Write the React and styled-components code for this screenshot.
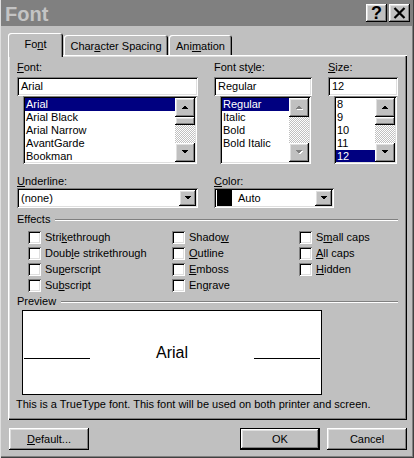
import React from 'react';
import styled, { createGlobalStyle, css } from 'styled-components';

const GlobalStyle = createGlobalStyle`
  html, body { margin: 0; padding: 0; background: #c0c0c0; }
  body {
    font-family: "Liberation Sans", Arial, sans-serif;
    font-size: 11px;
    color: #000;
  }
  * { box-sizing: border-box; }
`;

// win98 bevels
const raised = css`
  box-shadow: inset -1px -1px #000, inset 1px 1px #fff, inset -2px -2px #808080,
    inset 2px 2px #dfdfdf;
`;
const sunken = css`
  box-shadow: inset 1px 1px #808080, inset -1px -1px #fff, inset 2px 2px #000,
    inset -2px -2px #dfdfdf;
`;

const Window = styled.div`
  width: 414px;
  height: 458px;
  background: #c0c0c0;
  padding: 0 2px 2px 1px;
  box-shadow: inset 1px 0 #dfdfdf, inset -1px -1px #404040, inset -2px -2px #808080;
  display: flex;
  flex-direction: column;
`;

const TitleBar = styled.div`
  height: 26px;
  background: #808080;
  display: flex;
  align-items: center;
  justify-content: space-between;
  padding: 0 2px 0 4px;
`;

const Title = styled.div`
  font-size: 20px;
  font-weight: bold;
  color: #c4c4c4;
  margin-top: 2px;
`;

const TitleButtons = styled.div`
  display: flex;
  gap: 2px;
`;

const TitleButton = styled.div`
  width: 21px;
  height: 18px;
  background: #c0c0c0;
  ${raised};
  display: flex;
  align-items: center;
  justify-content: center;
  font-size: 18px;
  font-weight: bold;
  line-height: 18px;
`;

const Body = styled.div`
  padding: 7px 5px 0 7px;
  display: flex;
  flex-direction: column;
`;

const TabRow = styled.div`
  display: flex;
  align-items: flex-end;
  height: 22px;
  gap: 1px;
`;

const Tab = styled.div`
  position: relative;
  z-index: ${(p) => (p.$active ? 1 : 0)};
  width: ${(p) => p.$w}px;
  height: ${(p) => (p.$active ? 24 : 20)}px;
  margin-bottom: ${(p) => (p.$active ? -2 : 0)}px;
  padding: ${(p) => (p.$active ? '0 0 2px' : '2px 0 0')};
  background: #c0c0c0;
  border-radius: 3px 3px 0 0;
  box-shadow: inset 1px 1px #fff, inset -1px 0 #000, inset -2px 0 #808080;
  display: flex;
  align-items: center;
  justify-content: center;
  line-height: 13px;
`;

const Panel = styled.div`
  width: 399px;
  height: 365px;
  box-shadow: inset 1px 1px #fff, inset -1px -1px #000, inset -2px -2px #808080,
    inset 2px 2px #dfdfdf;
  padding: 6px 9px 0 9px;
  display: flex;
  flex-direction: column;
`;

const TopRow = styled.div`
  display: flex;
  gap: 16px;
`;

const Column = styled.div`
  width: ${(p) => p.$w}px;
  display: flex;
  flex-direction: column;
`;

const Label = styled.div`
  line-height: 13px;
  margin-bottom: ${(p) => p.$mb || 0}px;
  white-space: nowrap;
`;

const TextBox = styled.div`
  height: 19px;
  background: #fff;
  ${sunken};
  padding: 2px 2px 0 4px;
  line-height: 15px;
`;

const ListBox = styled.div`
  margin-left: 6px;
  width: calc(100% - 7px);
  height: 68px;
  background: #fff;
  ${sunken};
  padding: 2px;
  display: flex;
`;

const Items = styled.div`
  flex: 1;
  overflow: hidden;
`;

const Item = styled.div`
  height: 13px;
  line-height: 13px;
  padding-left: 1px;
  white-space: nowrap;
  background: ${(p) => (p.$selected ? '#000080' : 'transparent')};
  color: ${(p) => (p.$selected ? '#fff' : '#000')};
`;

const ScrollBar = styled.div`
  width: 20px;
  display: flex;
  flex-direction: column;
`;

const ArrowButton = styled.div`
  width: ${(p) => p.$w || 20}px;
  height: ${(p) => p.$h || 19}px;
  background: #c0c0c0;
  ${raised};
  display: flex;
  align-items: center;
  justify-content: center;
  flex-shrink: 0;
`;

const Track = styled.div`
  flex: 1;
  background: repeating-conic-gradient(#c0c0c0 0 25%, #fff 0 50%) 0 0 / 2px 2px;
`;

const Thumb = styled.div`
  width: 20px;
  height: 8px;
  background: #c0c0c0;
  ${raised};
`;

const Select = styled.div`
  height: 20px;
  width: ${(p) => p.$w}px;
  background: #fff;
  ${sunken};
  padding: 2px;
  display: flex;
  align-items: center;
`;

const SelectText = styled.div`
  flex: 1;
  padding-left: ${(p) => p.$pl || 2}px;
  line-height: 16px;
`;

const Swatch = styled.div`
  width: 15px;
  height: 16px;
  margin-left: 1px;
  background: #000;
`;

const Row = styled.div`
  display: flex;
  gap: 16px;
  margin-top: 11px;
`;

const GroupHeader = styled.div`
  display: flex;
  align-items: center;
  margin-top: ${(p) => p.$mt}px;
  line-height: 13px;
`;

const GroupLine = styled.div`
  flex: 1;
  margin-left: 5px;
  height: 2px;
  border-top: 1px solid #808080;
  border-bottom: 1px solid #fff;
`;

const Effects = styled.div`
  display: grid;
  grid-template-columns: 144px 127px 1fr;
  grid-auto-rows: 16px;
  padding-left: 11px;
  margin-top: 3px;
`;

const CheckItem = styled.div`
  display: flex;
  align-items: center;
  gap: 4px;
  white-space: nowrap;
`;

const CheckBox = styled.div`
  width: 13px;
  height: 13px;
  background: #fff;
  ${sunken};
`;

const PreviewBox = styled.div`
  margin: 2px 0 0 5px;
  width: 300px;
  height: 85px;
  background: #fff;
  border: 1px solid #000;
  display: flex;
  align-items: center;
  padding: 0 1px;
`;

const PreviewRow = styled.div`
  display: flex;
  align-items: flex-end;
  width: 100%;
  height: 16px;
`;

const PreviewLine = styled.div`
  width: 66px;
  height: 1px;
  background: #000;
  margin-bottom: 2px;
`;

const PreviewText = styled.div`
  flex: 1;
  text-align: center;
  font-size: 16px;
  line-height: 16px;
`;

const Info = styled.div`
  margin: 3px 0 0 -1px;
  line-height: 13px;
  white-space: nowrap;
`;

const ButtonRow = styled.div`
  display: flex;
  margin-top: 8px;
  padding-left: 1px;
  gap: 7px;
`;

const Button = styled.div`
  width: 80px;
  height: 22px;
  background: #c0c0c0;
  ${raised};
  border: ${(p) => (p.$default ? '1px solid #000' : 'none')};
  display: flex;
  align-items: center;
  justify-content: center;
  margin-left: ${(p) => p.$ml || 0}px;
`;

const Hot = ({ text, at }) => (
  <>
    {text.slice(0, at)}
    <u>{text[at]}</u>
    {text.slice(at + 1)}
  </>
);

const Arrow = ({ dir, disabled }) => {
  const pts = dir === 'up' ? '0,4 3.5,0.5 7,4' : '0,0 7,0 3.5,3.5';
  return (
    <svg width="8" height="5" viewBox="0 0 8 5" shapeRendering="crispEdges">
      {disabled && (
        <polygon points={pts} fill="#fff" transform="translate(1,1)" />
      )}
      <polygon points={pts} fill={disabled ? '#808080' : '#000'} />
    </svg>
  );
};

const Scroll = ({ disabled }) => (
  <ScrollBar>
    <ArrowButton>
      <Arrow dir="up" disabled={disabled} />
    </ArrowButton>
    <Track>{!disabled && <Thumb />}</Track>
    <ArrowButton>
      <Arrow dir="down" disabled={disabled} />
    </ArrowButton>
  </ScrollBar>
);

const fonts = ['Arial', 'Arial Black', 'Arial Narrow', 'AvantGarde', 'Bookman'];
const styles = ['Regular', 'Italic', 'Bold', 'Bold Italic'];
const sizes = ['8', '9', '10', '11', '12'];

const effects = [
  ['Strikethrough', 4],
  ['Shadow', 5],
  ['Small caps', 1],
  ['Double strikethrough', 4],
  ['Outline', 0],
  ['All caps', 0],
  ['Superscript', 2],
  ['Emboss', 0],
  ['Hidden', 0],
  ['Subscript', 2],
  ['Engrave', 2],
];

const App = () => {
  return (
    <Window>
      <GlobalStyle />
      <TitleBar>
        <Title>Font</Title>
        <TitleButtons>
          <TitleButton>?</TitleButton>
          <TitleButton>
            <svg width="13" height="12" viewBox="0 0 13 12">
              <path d="M1.5 1 L11.5 11 M11.5 1 L1.5 11" stroke="#000" strokeWidth="2.2" />
            </svg>
          </TitleButton>
        </TitleButtons>
      </TitleBar>

      <Body>
        <TabRow>
          <Tab $active $w={55}>
            <Hot text="Font" at={2} />
          </Tab>
          <Tab $w={104}>
            <Hot text="Character Spacing" at={4} />
          </Tab>
          <Tab $w={63}>
            <Hot text="Animation" at={3} />
          </Tab>
        </TabRow>

        <Panel>
          <TopRow>
            <Column $w={181}>
              <Label $mb={3}>
                <Hot text="Font:" at={0} />
              </Label>
              <TextBox>Arial</TextBox>
              <ListBox>
                <Items>
                  {fonts.map((f, i) => (
                    <Item key={f} $selected={i === 0}>
                      {f}
                    </Item>
                  ))}
                </Items>
                <Scroll />
              </ListBox>
            </Column>
            <Column $w={98}>
              <Label $mb={3}>
                <Hot text="Font style:" at={7} />
              </Label>
              <TextBox>Regular</TextBox>
              <ListBox>
                <Items>
                  {styles.map((s, i) => (
                    <Item key={s} $selected={i === 0}>
                      {s}
                    </Item>
                  ))}
                </Items>
                <Scroll disabled />
              </ListBox>
            </Column>
            <Column $w={70}>
              <Label $mb={3}>
                <Hot text="Size:" at={0} />
              </Label>
              <TextBox>12</TextBox>
              <ListBox>
                <Items>
                  {sizes.map((s, i) => (
                    <Item key={s} $selected={i === 4}>
                      {s}
                    </Item>
                  ))}
                </Items>
                <Scroll />
              </ListBox>
            </Column>
          </TopRow>

          <Row>
            <Column $w={181}>
              <Label>
                <Hot text="Underline:" at={0} />
              </Label>
              <Select $w={181}>
                <SelectText>(none)</SelectText>
                <ArrowButton $w={17} $h={16}>
                  <Arrow dir="down" />
                </ArrowButton>
              </Select>
            </Column>
            <Column $w={120}>
              <Label>
                <Hot text="Color:" at={0} />
              </Label>
              <Select $w={120}>
                <Swatch />
                <SelectText $pl={6}>Auto</SelectText>
                <ArrowButton $w={17} $h={16}>
                  <Arrow dir="down" />
                </ArrowButton>
              </Select>
            </Column>
          </Row>

          <GroupHeader $mt={5}>
            Effects
            <GroupLine />
          </GroupHeader>
          <Effects>
            {effects.map(([t, k]) => (
              <CheckItem key={t}>
                <CheckBox />
                <span>
                  <Hot text={t} at={k} />
                </span>
              </CheckItem>
            ))}
          </Effects>

          <GroupHeader $mt={2}>
            Preview
            <GroupLine />
          </GroupHeader>
          <PreviewBox>
            <PreviewRow>
              <PreviewLine />
              <PreviewText>Arial</PreviewText>
              <PreviewLine />
            </PreviewRow>
          </PreviewBox>
          <Info>
            This is a TrueType font. This font will be used on both printer and screen.
          </Info>
        </Panel>

        <ButtonRow>
          <Button>
            <Hot text="Default..." at={0} />
          </Button>
          <Button $default $ml={144}>
            OK
          </Button>
          <Button>Cancel</Button>
        </ButtonRow>
      </Body>
    </Window>
  );
};

export default App;
